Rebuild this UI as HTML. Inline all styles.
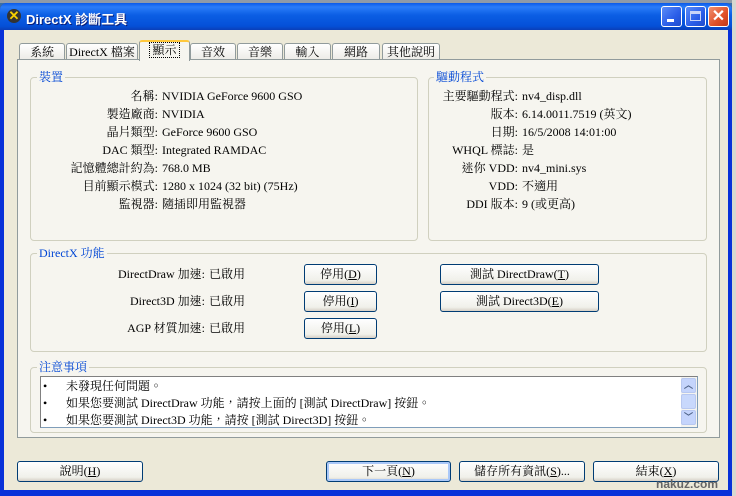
<!DOCTYPE html>
<html><head><meta charset="utf-8"><style>
*{margin:0;padding:0;box-sizing:border-box}
body{width:736px;height:496px;overflow:hidden;background:#3a6ea5;position:relative;font-family:"Liberation Serif","Noto Serif CJK TC","Noto Sans CJK TC",serif;font-size:12px;color:#000}
.a{position:absolute}
#win{left:0;top:3px;width:732px;height:493px;background:#0831d9;border-radius:7px 7px 0 0}
#title{left:0;top:3px;width:732px;height:27px;border-radius:7px 7px 0 0;background:linear-gradient(#0a5ae8,#2a7cf8 15%,#0b5ee4 45%,#0450d8 85%,#0a3fb8)}
#ttext{left:26px;top:9px;color:#fff;font-weight:bold;font-size:13px;font-family:"Liberation Sans","Noto Sans CJK TC",sans-serif;text-shadow:1px 1px #0a1e7a}
#body{left:4px;top:30px;width:724px;height:460px;background:#ece9d8}
.tb{width:21px;height:21px;top:6px;border:1px solid #fff;border-radius:3px;background:linear-gradient(135deg,#5a8cf8,#2a5de8 60%,#1f4ccc)}
.tab{top:43px;height:17px;border:1px solid #919b9c;border-bottom:none;border-radius:3px 3px 0 0;background:linear-gradient(#fff,#ecebe6);text-align:center;line-height:16px;font-size:12px}
#panel{left:17px;top:59px;width:703px;height:379px;background:#f6f5ef;border:1px solid #919b9c}
.g{border:1px solid #d0d0bf;border-radius:4px}
.gt{background:#f6f5ef;color:#0046d5;padding:0 2px;line-height:14px}
.r{position:absolute;white-space:nowrap;line-height:14px}
.btn{position:absolute;height:21px;border:1px solid #003c74;border-radius:3px;background:linear-gradient(#fff,#f0f0ea 80%,#d6d0c5);text-align:center;line-height:19px;white-space:nowrap}
</style></head><body>
<div class="a" style="left:0;top:0;width:736px;height:3px;background:#8e9aa8"></div>
<div class="a" style="left:732px;top:0;width:4px;height:496px;background:#d8d8d0"></div>
<div class="a" id="win"></div>
<div class="a" id="title"></div>
<div class="a" style="left:7px;top:9px;width:14px;height:14px;border-radius:7px;background:#333;color:#f8d000;font:bold 13px/14px 'Liberation Sans';text-align:center">✕</div>
<div class="a" id="ttext">DirectX 診斷工具</div>
<div class="a tb" style="left:661px"><div class="a" style="left:5px;top:12px;width:7px;height:3px;background:#fff"></div></div>
<div class="a tb" style="left:685px"><div class="a" style="left:4px;top:4px;width:11px;height:10px;border:1px solid #c8d4f8;border-top-width:3px"></div></div>
<div class="a tb" style="left:708px;background:linear-gradient(135deg,#f09070,#e05028 60%,#c03818);color:#fff;font:bold 16px/19px 'Liberation Sans';text-align:center">✕</div>
<div class="a" id="body"></div>

<div class="a tab" style="left:19px;width:46px">系統</div>
<div class="a tab" style="left:66px;width:72px">DirectX 檔案</div>
<div class="a tab" style="left:190px;width:46px">音效</div>
<div class="a tab" style="left:237px;width:46px">音樂</div>
<div class="a tab" style="left:284px;width:47px">輸入</div>
<div class="a tab" style="left:332px;width:48px">網路</div>
<div class="a tab" style="left:382px;width:58px">其他說明</div>
<div class="a" id="panel"></div>
<div class="a tab" style="left:139px;top:40px;height:21px;width:51px;border-top:2px solid #ffc83c;background:#f6f5ef;line-height:17px"><span style="border:1px dotted #000;padding:0 2px">顯示</span></div>

<div class="a g" style="left:30px;top:77px;width:388px;height:164px"></div>
<div class="a gt" style="left:37px;top:70px">裝置</div>
<div class="a g" style="left:428px;top:77px;width:279px;height:164px"></div>
<div class="a gt" style="left:434px;top:70px">驅動程式</div>
<div class="a g" style="left:30px;top:253px;width:677px;height:99px"></div>
<div class="a gt" style="left:37px;top:246px">DirectX 功能</div>
<div class="a g" style="left:30px;top:367px;width:677px;height:66px"></div>
<div class="a gt" style="left:37px;top:360px">注意事項</div>

<div class="r" style="right:578px;top:87px;text-align:right;line-height:18px">名稱:<br>製造廠商:<br>晶片類型:<br>DAC 類型:<br>記憶體總計約為:<br>目前顯示模式:<br>監視器:</div>
<div class="r" style="left:162px;top:87px;line-height:18px">NVIDIA GeForce 9600 GSO<br>NVIDIA<br>GeForce 9600 GSO<br>Integrated RAMDAC<br>768.0 MB<br>1280 x 1024 (32 bit) (75Hz)<br>隨插即用監視器</div>
<div class="r" style="right:218px;top:87px;text-align:right;line-height:18px">主要驅動程式:<br>版本:<br>日期:<br>WHQL 標誌:<br>迷你 VDD:<br>VDD:<br>DDI 版本:</div>
<div class="r" style="left:522px;top:87px;line-height:18px">nv4_disp.dll<br>6.14.0011.7519 (英文)<br>16/5/2008 14:01:00<br>是<br>nv4_mini.sys<br>不適用<br>9 (或更高)</div>

<div class="r" style="right:531px;top:261px;text-align:right;line-height:27px">DirectDraw 加速:<br>Direct3D 加速:<br>AGP 材質加速:</div>
<div class="r" style="left:209px;top:261px;line-height:27px">已啟用<br>已啟用<br>已啟用</div>
<div class="btn" style="left:304px;top:264px;width:73px">停用(<u>D</u>)</div>
<div class="btn" style="left:304px;top:291px;width:73px">停用(<u>I</u>)</div>
<div class="btn" style="left:304px;top:318px;width:73px">停用(<u>L</u>)</div>
<div class="btn" style="left:440px;top:264px;width:159px">測試 DirectDraw(<u>T</u>)</div>
<div class="btn" style="left:440px;top:291px;width:159px">測試 Direct3D(<u>E</u>)</div>

<div class="a" style="left:40px;top:376px;width:658px;height:52px;background:#fff;border:1px solid #7f9db9;border-top-color:#808080;border-left-color:#808080"></div>
<div class="r" style="left:43px;top:378px;line-height:17px">•<br>•<br>•</div>
<div class="r" style="left:66px;top:378px;line-height:17px">未發現任何問題。<br>如果您要測試 DirectDraw 功能，請按上面的 [測試 DirectDraw] 按鈕。<br>如果您要測試 Direct3D 功能，請按 [測試 Direct3D] 按鈕。</div>
<div class="a" style="left:681px;top:377px;width:16px;height:50px;background:#f4f4f0"></div>
<div class="a" style="left:681px;top:378px;width:15px;height:15px;border:1px solid #b8c8f0;border-radius:2px;background:#c4d4fc;color:#4d6185;font:bold 9px/13px 'Liberation Sans';text-align:center">︿</div>
<div class="a" style="left:681px;top:394px;width:15px;height:15px;border:1px solid #b8c8f0;border-radius:2px;background:#c8d8fc"></div>
<div class="a" style="left:681px;top:410px;width:15px;height:15px;border:1px solid #b8c8f0;border-radius:2px;background:#c4d4fc;color:#4d6185;font:bold 9px/13px 'Liberation Sans';text-align:center">﹀</div>

<div class="btn" style="left:17px;top:461px;width:126px">說明(<u>H</u>)</div>
<div class="btn" style="left:326px;top:461px;width:125px;box-shadow:inset 0 0 0 2px #aac8f8">下一頁(<u>N</u>)</div>
<div class="btn" style="left:459px;top:461px;width:126px">儲存所有資訊(<u>S</u>)...</div>
<div class="btn" style="left:593px;top:461px;width:126px">結束(<u>X</u>)</div>
<div class="r" style="left:656px;top:477px;font:bold 12px/14px 'Liberation Sans';color:#666">nakuz.com</div>
</body></html>
